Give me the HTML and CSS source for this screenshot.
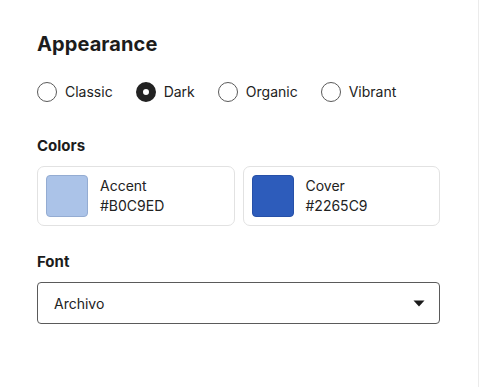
FILE: index.html
```html
<!DOCTYPE html>
<html lang="en">
<head>
  <meta charset="UTF-8" />
  <meta name="viewport" content="width=device-width, initial-scale=1.0"/>
  <title>Appearance</title>
  <link rel="stylesheet" href="styles.css">
</head>
<body>
  <div class="panel">
    <h1>Appearance</h1>

    <div class="themes">
      <label class="theme"><input type="radio" name="theme"> Classic</label>
      <label class="theme"><input type="radio" name="theme" checked> Dark</label>
      <label class="theme"><input type="radio" name="theme"> Organic</label>
      <label class="theme"><input type="radio" name="theme"> Vibrant</label>
    </div>

    <h2 class="colors-title">Colors</h2>
    <div class="colors">
      <div class="color-card">
        <div class="swatch accent"></div>
        <div class="color-info">
          <div>Accent</div>
          <div>#B0C9ED</div>
        </div>
      </div>
      <div class="color-card">
        <div class="swatch cover"></div>
        <div class="color-info">
          <div>Cover</div>
          <div>#2265C9</div>
        </div>
      </div>
    </div>

    <h2 class="font-title">Font</h2>
    <div class="select">
      <span>Archivo</span>
      <svg width="12" height="7" viewBox="0 0 12 7"><path d="M0.5 0.5 L11.5 0.5 L6 6.5 Z" fill="#1a1a1a"/></svg>
    </div>
  </div>
</body>
</html>
```

FILE: styles.css
```css
* { box-sizing: border-box; }

body {
  margin: 0;
  background: #fff;
  font-family: Inter, 'Noto Sans', sans-serif;
  color: #222;
}

.panel {
  width: 479px;
  min-height: 100vh;
  padding: 32px 38px 0 37px;
  border-right: 1px solid #ebebeb;
}

h1 {
  margin: 0;
  font-size: 20px;
  line-height: 24px;
  font-weight: 700;
  letter-spacing: 0.1px;
  color: #1c1c1c;
}

h2 {
  margin: 0;
  font-size: 15px;
  line-height: 20px;
  font-weight: 700;
  color: #1c1c1c;
}

.themes {
  display: flex;
  gap: 23px;
  margin-top: 26px;
  height: 20px;
}

.theme {
  display: flex;
  align-items: center;
  gap: 8px;
  font-size: 14px;
  line-height: 20px;
  color: #222;
}

.theme input {
  appearance: none;
  -webkit-appearance: none;
  margin: 0;
  width: 20px;
  height: 20px;
  border: 1px solid #5a5a5a;
  border-radius: 50%;
  background: #fff;
}

.theme input:checked {
  border: 7px solid #222;
  background: #fff;
}

.colors-title {
  margin-top: 34px;
}

.colors {
  display: grid;
  grid-template-columns: 1fr 1fr;
  gap: 8px;
  margin-top: 10px;
}

.color-card {
  display: flex;
  align-items: center;
  gap: 12px;
  height: 60px;
  padding: 8px;
  border: 1px solid #e2e2e2;
  border-radius: 7px;
}

.swatch {
  width: 42px;
  height: 42px;
  border-radius: 4px;
}

.swatch.accent {
  background: #abc3e8;
  border: 1px solid #94acd2;
}

.swatch.cover {
  background: #2d5cbb;
  border: 1px solid #2650a8;
}

.color-info {
  font-size: 14px;
  line-height: 20px;
  color: #222;
}

.font-title {
  margin-top: 26px;
}

.select {
  margin-top: 10px;
  height: 42px;
  display: flex;
  align-items: center;
  justify-content: space-between;
  padding: 0 14px 0 16px;
  border: 1px solid #5a5a5a;
  border-radius: 4px;
  font-size: 14px;
  color: #222;
}
```
